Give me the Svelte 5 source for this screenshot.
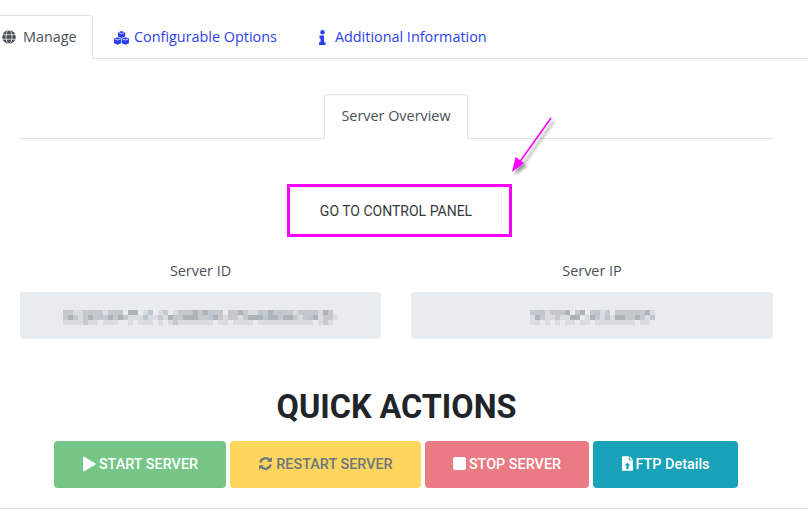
<script lang="ts">
	// greys for the blurred-out values, one row per string, 5px cells
	const idCells = [
		'bbaabbbbabbd.cc.ad.ab.abbbcbcdbb.bbcbaabbcbdbbabbbbacb.',
		'bcbabcbdbcbcbaaadaabacbbcccbbdcbabbabcccdccbccbabdcabba',
		'aaaabaa.aaa..a.aaa.a.abaaaaaaa.aa.aaaa.aaaaaaaaaaa.aba.'
	];
	const ipCells = [
		'bbdabbbc.bc.bdab.bbbbbbca',
		'acbaabaacc.acbadaccbbcbad',
		'aa.a.a.aa.aa.aaaaaaaa.aa.'
	];
	const greys: Record<string, string> = { a: '#dadde0', b: '#c5c9ce', c: '#aeb3ba', d: '#bcc6d2' };
	const rows = (src: string[]) => src.map((r) => [...r].map((c) => greys[c] ?? 'transparent'));
</script>

{#snippet mosaic(src: string[])}
	<div class="mosaic">
		{#each rows(src) as row}
			<div class="mosaic-row">
				{#each row as c}
					<i style="background:{c}"></i>
				{/each}
			</div>
		{/each}
	</div>
{/snippet}

<div class="page">
	<ul class="tabs main-tabs">
		<li class="tab active">
			<svg class="ic globe" viewBox="0 0 16 16" fill="none">
				<circle cx="8" cy="8" r="7.800" fill="#495057" />
				<ellipse cx="8" cy="8" rx="3.400" ry="7.800" stroke="#fff" stroke-width=".8" />
				<path d="M.2 5.400h15.600M.2 10.600h15.600" stroke="#fff" stroke-width=".8" />
			</svg>
			Manage
		</li>
		<li class="tab link">
			<svg class="ic" viewBox="0 0 15 14" fill="#2b3ff0" stroke-linejoin="miter">
				<path d="M7.500 0l3.600 1.400v4L7.500 6.900 3.900 5.400v-4z" />
				<path d="M3.700 6.200l3.500 1.400v4.600l-3.500 1.600L0 12.200V7.600z" />
				<path d="M11.300 6.200L15 7.600v4.600l-3.700 1.600-3.500-1.600V7.600z" />
				<path d="M4.800 1.700l2.700 1 2.700-1M1 8l2.700 1 2.700-1M8.700 8l2.600 1 2.700-1" fill="none" stroke="#fff" stroke-width=".8" />
			</svg>
			Configurable Options
		</li>
		<li class="tab link">
			<svg class="ic ic-i" viewBox="0 0 7 15" fill="#2b3ff0">
				<circle cx="3.500" cy="2.200" r="2.200" />
				<path d="M.5 5.600h4.500v6.600h1.500V15H0v-2.800h1.500V8.400h-1z" />
			</svg>
			Additional Information
		</li>
	</ul>

	<div class="panel">
		<ul class="tabs sub-tabs">
			<li class="tab active">Server Overview</li>
		</ul>

		<div class="cp-row">
			<div class="cp-mark">
				<button class="cp-btn">GO TO CONTROL PANEL</button>
			</div>
		</div>

		<div class="fields">
			<div class="field">
				<label for="sid">Server ID</label>
				<div id="sid" class="value">{@render mosaic(idCells)}</div>
			</div>
			<div class="field">
				<label for="sip">Server IP</label>
				<div id="sip" class="value">{@render mosaic(ipCells)}</div>
			</div>
		</div>

		<h2>QUICK ACTIONS</h2>

		<div class="actions">
			<button class="act start">
				<svg viewBox="0 0 14 16" width="14" height="16" fill="#fff"><path d="M1 1.500c0-.6.600-1 1.200-.7l11 6.500c.5.300.5 1.100 0 1.400l-11 6.500c-.6.300-1.200-.1-1.200-.7z" /></svg>
				START SERVER
			</button>
			<button class="act restart">
				<svg viewBox="0 0 16 16" width="15" height="15" fill="none" stroke="#6c757d" stroke-width="2.400">
					<path d="M2.500 7a5.700 5.700 0 0 1 10-2.500" />
					<path d="M13.500 9a5.700 5.700 0 0 1-10 2.500" />
					<path d="M14.800 1v5.200H9.600z" fill="#6c757d" stroke="none" />
					<path d="M1.200 15V9.800h5.200z" fill="#6c757d" stroke="none" />
				</svg>
				RESTART SERVER
			</button>
			<button class="act stop">
				<span class="square"></span>
				STOP SERVER
			</button>
			<button class="act ftp">
				<svg viewBox="0 0 12 16" width="11" height="15"><path fill="#fff" d="M0 1a1 1 0 0 1 1-1h6.500v4.500H12V15a1 1 0 0 1-1 1H1a1 1 0 0 1-1-1z" /><path fill="#fff" d="M8.500 0L12 3.500H8.500z" /><path fill="#17a2b8" d="M6 6.800l3.200 3.400H7.200V14H4.800v-3.800H2.800z" /></svg>
				FTP Details
			</button>
		</div>
		<hr />
	</div>

	<svg class="arrow" width="70" height="70" viewBox="0 0 70 70">
		<defs>
			<filter id="sh" x="-30%" y="-30%" width="170%" height="170%">
				<feDropShadow dx="3" dy="3" stdDeviation="1.500" flood-color="#000" flood-opacity=".4" />
			</filter>
		</defs>
		<g filter="url(#sh)">
			<path d="M46 6L14 51" stroke="#f0f" stroke-width="1.600" fill="none" />
			<path d="M7 60l3.500-15 8.500 6z" fill="#f0f" />
		</g>
	</svg>
</div>

<style>
	:global(body) { margin: 0; background: #fff; }
	.page { position: relative; width: 808px; height: 532px; overflow: hidden; font-family: "Open Sans", sans-serif; font-size: 14.400px; color: #495057; }
	ul { list-style: none; margin: 0; padding: 0; }
	.tabs { display: flex; border-bottom: 1px solid #dee2e6; }
	.tab { box-sizing: border-box; border: 1px solid transparent; border-radius: 4px 4px 0 0; margin-bottom: -1px; white-space: nowrap; }
	.tab.active { background: #fff; border-color: #dee2e6 #dee2e6 #fff; }
	.main-tabs { margin-top: 15px; height: 43px; }
	.main-tabs .tab { height: 44px; padding: 11px 16px 0 20px; display: flex; align-items: flex-start; gap: 5px; line-height: 20px; }
	.main-tabs .tab.active { margin-left: -19px; width: 112px; }
	.link { color: #2b3ff0; }
	.ic { width: 15px; height: 14px; margin-top: 4px; flex: none; }
	.globe { width: 14px; height: 14px; margin: 3px 2px 0 0; }
	.ic-i { width: 7px; height: 15px; margin: 3px 4px 0 4px; }
	.panel { padding: 0 35px 0 20px; }
	.sub-tabs { margin-top: 35px; height: 44px; justify-content: center; padding-right: 1px; }
	.sub-tabs .tab { height: 45px; padding: 11px 16px 0; line-height: 20px; }
	.cp-row { display: flex; justify-content: center; margin-top: 45px; }
	.cp-mark { border: 3px solid #f0f; padding: 0 7px 0 0; margin-left: 6px; }
	.cp-btn { display: block; width: 212px; height: 47px; margin: 0; padding: 0; border: 1px solid #f0f0f2; border-radius: 4px; background: #fff; font: 400 14px/1 Roboto, sans-serif; color: #343a40; }
	.fields { display: grid; grid-template-columns: 361px 362px; gap: 30px; margin-top: 24px; }
	.field { display: flex; flex-direction: column; align-items: stretch; }
	label { text-align: center; line-height: 20px; height: 20px; margin-bottom: 11px; }
	.value { display: flex; align-items: center; justify-content: center; height: 47px; background: #e9ecef; border-radius: 4px; }
	.mosaic { display: flex; flex-direction: column; margin-top: 4px; }
	.mosaic-row { display: flex; }
	.mosaic-row i { display: block; width: 5px; height: 5px; }
	h2 { margin: 48px 0 0; text-align: center; font: 700 32.400px/40px Roboto, sans-serif; color: #212529; height: 40px; }
	.actions { display: flex; justify-content: center; gap: 4px; margin: 14px 0 0 -1px; }
	.act { display: flex; align-items: center; justify-content: center; gap: 3px; height: 47px; padding: 2px 0 0; border: 0; border-radius: 4px; font: 500 14.400px/1 Roboto, sans-serif; color: #fff; }
	.act svg, .square { margin-top: -4px; }
	.start { width: 172px; background: #75c687; }
	.restart { width: 191px; background: #ffd65d; color: #6c757d; }
	.stop { width: 164px; background: #ea7b85; }
	.ftp { width: 145px; background: #17a2b8; }
	.square { width: 13px; height: 13px; background: #fff; border-radius: 2px; }
	hr { margin: 20px -35px 0 -20px; border: 0; border-top: 1px solid #dddddd; }
	.arrow { position: absolute; left: 505px; top: 112px; }
</style>
